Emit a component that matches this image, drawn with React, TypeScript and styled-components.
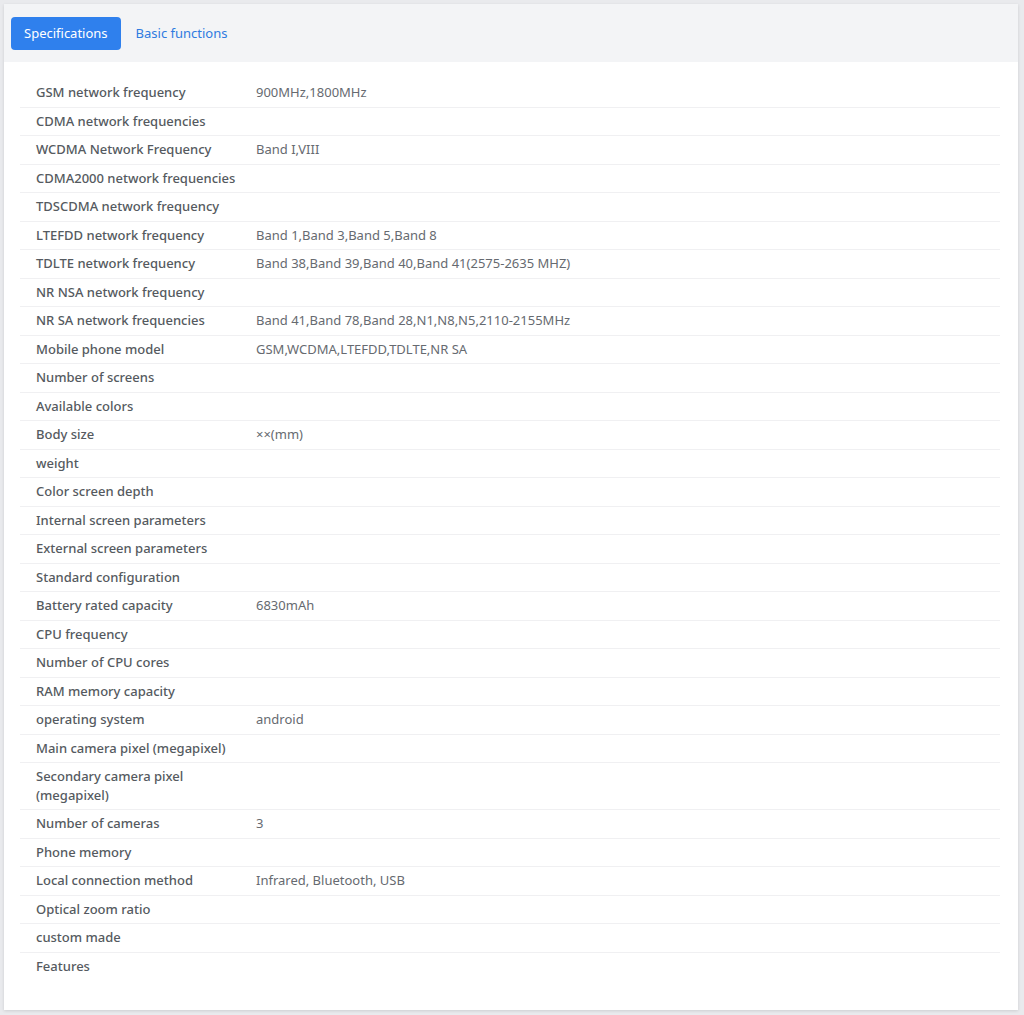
import styled, { createGlobalStyle } from 'styled-components';

const GlobalStyle = createGlobalStyle`
  html, body { margin: 0; padding: 0; background: #e9eaed; }
  body { font-family: "Noto Sans", "Open Sans", sans-serif; }
`;

const specs: [string, string][] = [
  ['GSM network frequency', '900MHz,1800MHz'],
  ['CDMA network frequencies', ''],
  ['WCDMA Network Frequency', 'Band I,VIII'],
  ['CDMA2000 network frequencies', ''],
  ['TDSCDMA network frequency', ''],
  ['LTEFDD network frequency', 'Band 1,Band 3,Band 5,Band 8'],
  ['TDLTE network frequency', 'Band 38,Band 39,Band 40,Band 41(2575-2635 MHZ)'],
  ['NR NSA network frequency', ''],
  ['NR SA network frequencies', 'Band 41,Band 78,Band 28,N1,N8,N5,2110-2155MHz'],
  ['Mobile phone model', 'GSM,WCDMA,LTEFDD,TDLTE,NR SA'],
  ['Number of screens', ''],
  ['Available colors', ''],
  ['Body size', '××(mm)'],
  ['weight', ''],
  ['Color screen depth', ''],
  ['Internal screen parameters', ''],
  ['External screen parameters', ''],
  ['Standard configuration', ''],
  ['Battery rated capacity', '6830mAh'],
  ['CPU frequency', ''],
  ['Number of CPU cores', ''],
  ['RAM memory capacity', ''],
  ['operating system', 'android'],
  ['Main camera pixel (megapixel)', ''],
  ['Secondary camera pixel (megapixel)', ''],
  ['Number of cameras', '3'],
  ['Phone memory', ''],
  ['Local connection method', 'Infrared, Bluetooth, USB'],
  ['Optical zoom ratio', ''],
  ['custom made', ''],
  ['Features', ''],
];

const App = () => (
  <>
    <GlobalStyle />
    <Page>
      <Card>
        <TabBar>
          <Tab $active>Specifications</Tab>
          <Tab>Basic functions</Tab>
        </TabBar>
        <Body>
          {specs.map(([label, value], i) => (
            <Row key={label} $last={i === specs.length - 1}>
              <Label>{label}</Label>
              <Value>{value}</Value>
            </Row>
          ))}
        </Body>
      </Card>
    </Page>
  </>
);

export default App;

const Page = styled.div`
  padding: 4px 6px 5px 4px;
`;

const Card = styled.div`
  background: #fff;
  height: 1006px;
  box-shadow: 0 1px 3px rgba(0, 0, 0, 0.12);
`;

const TabBar = styled.div`
  display: flex;
  align-items: center;
  gap: 2px;
  height: 58px;
  padding-left: 7px;
  background: #f3f4f6;
`;

const Tab = styled.div<{ $active?: boolean }>`
  height: 33px;
  padding: 0 13px;
  display: flex;
  align-items: center;
  border-radius: 4px;
  font-size: 13px;
  color: ${p => (p.$active ? '#fff' : '#2f7be0')};
  background: ${p => (p.$active ? '#2f80ed' : 'transparent')};
`;

const Body = styled.div`
  padding: 17px 18px 0 16px;
`;

const Row = styled.div<{ $last?: boolean }>`
  display: grid;
  grid-template-columns: 220px 1fr;
  align-items: center;
  min-height: 28.5px;
  padding: 0 0 0 16px;
  box-sizing: border-box;
  border-bottom: 1px solid ${p => (p.$last ? 'transparent' : '#f0f0f2')};
  font-size: 13px;
  line-height: 19px;
`;

const Label = styled.div`
  color: #555a60;
  font-weight: 500;
  padding: 4px 0;
  max-width: 200px;
`;

const Value = styled.div`
  color: #666a70;
`;
